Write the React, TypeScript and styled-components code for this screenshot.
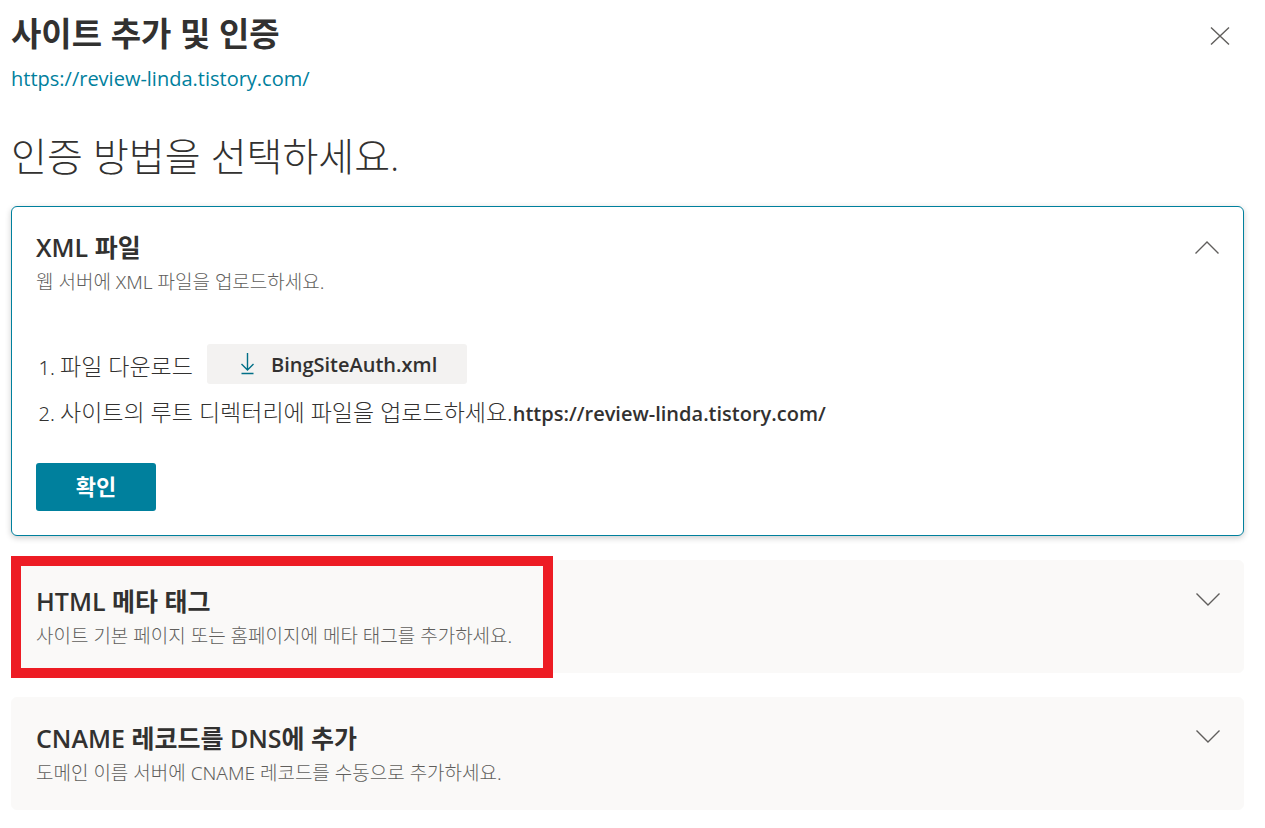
import React from "react";
import styled, { createGlobalStyle } from "styled-components";

const GlobalStyle = createGlobalStyle`
  *, *::before, *::after { box-sizing: border-box; }
  body {
    margin: 0;
    background: #ffffff;
    color: #323130;
    font-family: "Open Sans", "Noto Sans CJK KR", sans-serif;
  }
  button { font-family: inherit; color: inherit; }
`;

const lightText = `"Noto Sans", "Noto Sans CJK KR", sans-serif`;

const Page = styled.main`
  padding: 12px 21px 18px 11px;
`;

const Header = styled.header`
  display: flex;
  justify-content: space-between;
  align-items: flex-start;
`;

const Title = styled.h1`
  margin: 0;
  font-size: 33px;
  line-height: 44px;
  font-weight: 600;
`;

const SiteLink = styled.a`
  display: inline-block;
  margin-top: 9px;
  font-size: 20px;
  line-height: 28px;
  color: #00809d;
  text-decoration: none;
`;

const IconButton = styled.button`
  display: flex;
  flex: none;
  padding: 0;
  border: 0;
  background: none;
  color: #605e5c;
  cursor: pointer;
`;

const CloseButton = styled(IconButton)`
  margin: 14px 14px 0 0;
`;

const Prompt = styled.h2`
  margin: 36px 0 23px;
  font-size: 39px;
  line-height: 54px;
  font-weight: 300;
`;

const Methods = styled.div`
  display: flex;
  flex-direction: column;
  gap: 24px;
`;

const Card = styled.section<{ $open?: boolean }>`
  position: relative;
  padding: 24px 23px ${(p) => (p.$open ? 24 : 21)}px 24px;
  border: 1px solid ${(p) => (p.$open ? "#00809d" : "#faf9f8")};
  border-radius: 6px;
  background: ${(p) => (p.$open ? "#ffffff" : "#faf9f8")};
  box-shadow: ${(p) => (p.$open ? "0 2px 6px rgba(0, 0, 0, 0.2)" : "none")};
`;

const CardHeader = styled.div`
  display: flex;
  justify-content: space-between;
  align-items: flex-start;
`;

const CardTitle = styled.h3`
  margin: 0 0 4px;
  font-size: 25px;
  line-height: 32px;
  font-weight: 600;
`;

const CardText = styled.p`
  margin: 0;
  font-family: ${lightText};
  font-size: 19px;
  line-height: 30px;
  font-weight: 300;
  color: #605e5c;
`;

const Steps = styled.ol`
  display: flex;
  flex-direction: column;
  gap: 13px;
  margin: 47px 0 34px;
  padding-left: 24px;
  font-family: ${lightText};
  font-size: 23px;
  font-weight: 300;

  li::marker { font-size: 20px; }
`;

const Step = styled.li`
  line-height: 30px;

  strong {
    font-family: "Open Sans", sans-serif;
    font-size: 20px;
    font-weight: 600;
  }
`;

const DownloadButton = styled.button`
  display: inline-flex;
  align-items: center;
  gap: 16px;
  height: 40px;
  margin-left: 14px;
  padding: 0 30px 0 33px;
  border: 0;
  border-radius: 3px;
  background: #f3f2f1;
  font-family: "Open Sans", sans-serif;
  font-size: 20px;
  font-weight: 600;
  cursor: pointer;
`;

const ConfirmButton = styled.button`
  display: block;
  width: 120px;
  height: 48px;
  padding: 0 0 4px;
  border: 0;
  border-radius: 3px;
  background: #00809d;
  color: #ffffff;
  font-size: 22px;
  font-weight: 700;
  cursor: pointer;
`;

const Highlight = styled.div`
  position: absolute;
  top: -5px;
  left: -1px;
  width: 542px;
  height: 122px;
  border: 10px solid #ed1c24;
  pointer-events: none;
`;

function CloseIcon() {
  return (
    <svg width="20" height="20" viewBox="0 0 20 20" fill="none" stroke="currentColor" strokeWidth="1.4" aria-hidden="true">
      <path d="M1 1.5 19 18.5M19 1.5 1 18.5" />
    </svg>
  );
}

function Chevron({ up }: { up?: boolean }) {
  return (
    <svg width="24" height="32" viewBox="0 0 24 32" fill="none" stroke="currentColor" strokeWidth="1.4" overflow="visible" aria-hidden="true">
      <path d={up ? "M-.5 22.5 11 11 22.5 22.5" : "M.5 8.5 12 20 23.5 8.5"} />
    </svg>
  );
}

function DownloadIcon() {
  return (
    <svg width="15" height="22" viewBox="0 0 15 22" fill="none" stroke="#006f87" strokeWidth="1.4" aria-hidden="true">
      <path d="M7.5 0V17M1.5 11 7.5 17 13.5 11M1.5 20.5H13.5" />
    </svg>
  );
}

type MethodProps = {
  title: string;
  text: string;
  open?: boolean;
  highlighted?: boolean;
  children?: React.ReactNode;
};

function Method({ title, text, open, highlighted, children }: MethodProps) {
  return (
    <Card $open={open}>
      <CardHeader>
        <div>
          <CardTitle>{title}</CardTitle>
          <CardText>{text}</CardText>
        </div>
        <IconButton type="button" aria-expanded={!!open} aria-label={title}>
          <Chevron up={open} />
        </IconButton>
      </CardHeader>
      {children}
      {highlighted && <Highlight />}
    </Card>
  );
}

const SITE = "https://review-linda.tistory.com/";

export default function App() {
  return (
    <>
      <GlobalStyle />
      <Page>
        <Header>
          <div>
            <Title>사이트 추가 및 인증</Title>
            <SiteLink href={SITE}>{SITE}</SiteLink>
          </div>
          <CloseButton type="button" aria-label="닫기">
            <CloseIcon />
          </CloseButton>
        </Header>
        <Prompt>인증 방법을 선택하세요.</Prompt>
        <Methods>
          <Method open title="XML 파일" text="웹 서버에 XML 파일을 업로드하세요.">
            <Steps>
              <Step>
                파일 다운로드
                <DownloadButton type="button">
                  <DownloadIcon />
                  BingSiteAuth.xml
                </DownloadButton>
              </Step>
              <Step>
                사이트의 루트 디렉터리에 파일을 업로드하세요.<strong>{SITE}</strong>
              </Step>
            </Steps>
            <ConfirmButton type="button">확인</ConfirmButton>
          </Method>
          <Method
            highlighted
            title="HTML 메타 태그"
            text="사이트 기본 페이지 또는 홈페이지에 메타 태그를 추가하세요."
          />
          <Method
            title="CNAME 레코드를 DNS에 추가"
            text="도메인 이름 서버에 CNAME 레코드를 수동으로 추가하세요."
          />
        </Methods>
      </Page>
    </>
  );
}
